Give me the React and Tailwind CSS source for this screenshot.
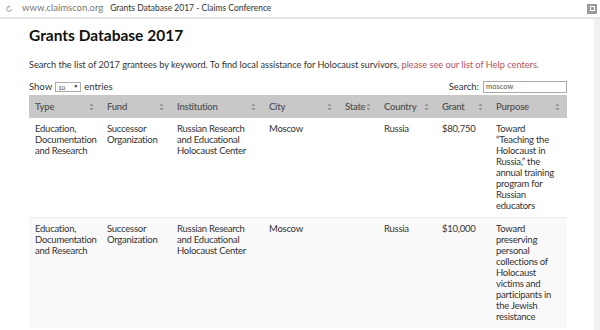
import React from "react";

function SortIcon() {
  return (
    <svg width="5" height="8" viewBox="0 0 5 8" className="shrink-0">
      <path d="M2.5 0.5 L4.5 3 L0.5 3 Z" fill="#8f8f8f" />
      <path d="M2.5 7.5 L4.5 5 L0.5 5 Z" fill="#8f8f8f" />
    </svg>
  );
}

const columns = [
  { name: "Type", w: "w-[72px]" },
  { name: "Fund", w: "w-[70px]" },
  { name: "Institution", w: "w-[92px]" },
  { name: "City", w: "w-[76px]" },
  { name: "State", w: "w-[39px]" },
  { name: "Country", w: "w-[58px]" },
  { name: "Grant", w: "w-[54px]" },
  { name: "Purpose", w: "w-[77px]" },
];

const rows = [
  {
    type: "Education, Documentation and Research",
    fund: "Successor Organization",
    inst: "Russian Research and Educational Holocaust Center",
    city: "Moscow",
    state: "",
    country: "Russia",
    grant: "$80,750",
    purpose: "Toward “Teaching the Holocaust in Russia,” the annual training program for Russian educators",
  },
  {
    type: "Education, Documentation and Research",
    fund: "Successor Organization",
    inst: "Russian Research and Educational Holocaust Center",
    city: "Moscow",
    state: "",
    country: "Russia",
    grant: "$10,000",
    purpose: "Toward preserving personal collections of Holocaust victims and participants in the Jewish resistance",
  },
];

export default function App() {
  return (
    <div className="w-[600px] h-[330px] overflow-hidden bg-white font-['Lato',sans-serif] text-[#333]">
      {/* browser bar */}
      <div className="h-[19px] flex items-center border-b-2 border-[#e4e4e4] pl-[5px] pr-[3px]">
        <svg width="8" height="8" viewBox="0 0 10 10" className="mr-[9px]">
          <path d="M8 5 A3 3 0 1 1 5 2" fill="none" stroke="#999" strokeWidth="1.2" />
          <path d="M4.5 0.5 L7 2 L4.5 3.5 Z" fill="#999" />
        </svg>
        <span className="text-[9.5px] text-[#777]">www.claimscon.org</span>
        <span className="ml-[7px] text-[8.5px] text-[#333]">Grants Database 2017 - Claims Conference</span>
        <div className="ml-auto w-[10px] h-[10px] bg-[#9a9a9a] flex items-center justify-center">
          <div className="w-[5px] h-[5px] border border-white" />
        </div>
      </div>

      <div className="flex h-[311px]">
        <div className="flex-1 pl-[29px] pr-[27px]">
          <h1 className="mt-[6px] text-[15.5px] leading-[20px] font-bold text-[#111]">
            Grants Database 2017
          </h1>
          <p className="mt-[14px] text-[9.2px] leading-[12px] text-[#333] whitespace-nowrap">
            Search the list of 2017 grantees by keyword. To find local assistance for Holocaust survivors,{" "}
            <span className="text-[#b5525c]">please see our list of Help centers.</span>
          </p>

          <div className="mt-[10px] h-[12px] flex items-center justify-between text-[9.5px]">
            <div className="flex items-center gap-[3px]">
              <span>Show</span>
              <div className="w-[26px] h-[10px] border border-[#aaa] flex items-center justify-between px-[2px] text-[6px]">
                <span>10</span>
                <span className="text-[5px]">▼</span>
              </div>
              <span>entries</span>
            </div>
            <div className="flex items-center gap-[4px]">
              <span>Search:</span>
              <div className="w-[84px] h-[12px] border border-[#aaa] px-[2px] text-[7.5px] leading-[10px] text-[#555]">
                moscow
              </div>
            </div>
          </div>

          <table className="mt-[2px] w-[538px] table-fixed border-collapse text-[9.5px] leading-[11px] tracking-[-0.25px]">
            <thead>
              <tr className="bg-[#c8c8c8] h-[23px]">
                {columns.map((c) => (
                  <th key={c.name} className={`${c.w} pl-[6px] pr-[7px] text-left font-semibold text-[#555]`}>
                    <div className="flex items-center justify-between">
                      <span>{c.name}</span>
                      <SortIcon />
                    </div>
                  </th>
                ))}
              </tr>
            </thead>
            <tbody>
              {rows.map((r, i) => (
                <tr key={i} className={i % 2 ? "bg-[#f9f9f9] border-t border-[#ececec]" : "bg-white"}>
                  {[r.type, r.fund, r.inst, r.city, r.state, r.country, r.grant].map((v, j) => (
                    <td key={j} className="align-top pl-[6px] pr-[2px] pt-[5px] pb-[6px]">
                      {v}
                    </td>
                  ))}
                  <td className="align-top pl-[6px] pr-[10px] pt-[5px] pb-[6px]">{r.purpose}</td>
                </tr>
              ))}
            </tbody>
          </table>
        </div>
        <div className="w-[6px] bg-[#f1f1f1]" />
      </div>
    </div>
  );
}
